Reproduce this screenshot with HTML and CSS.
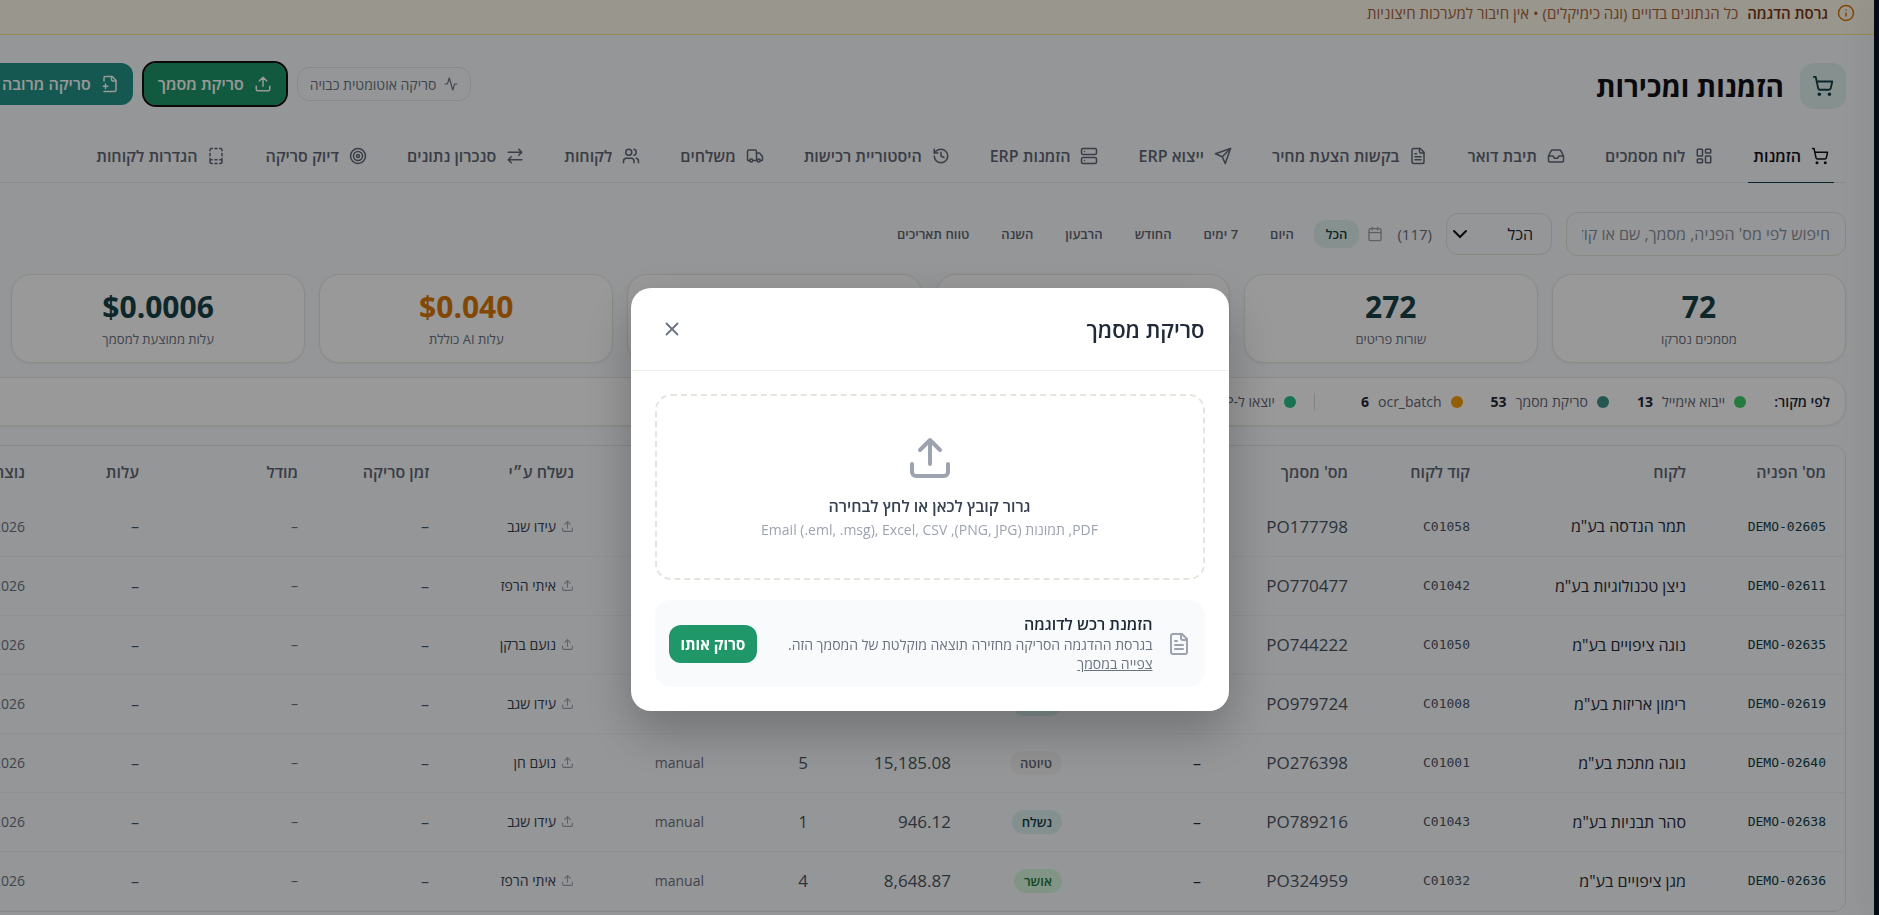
FILE: index.html
```html
<!DOCTYPE html>
<html lang="he" dir="rtl">
<head>
  <meta charset="UTF-8">
  <meta name="viewport" content="width=device-width, initial-scale=1">
  <title>הזמנות ומכירות</title>
  <link rel="stylesheet" href="styles.css">
</head>
<body>
  <!-- אייקונים -->
  <svg class="sprite" aria-hidden="true">
    <symbol id="i-cart" viewBox="0 0 24 24"><circle cx="8" cy="21" r="1"/><circle cx="19" cy="21" r="1"/><path d="M2.05 2.05h2l2.66 12.42a2 2 0 0 0 2 1.58h9.78a2 2 0 0 0 1.95-1.57l1.65-7.43H5.12"/></symbol>
    <symbol id="i-info" viewBox="0 0 24 24"><circle cx="12" cy="12" r="10"/><path d="M12 16v-4M12 8h.01"/></symbol>
    <symbol id="i-activity" viewBox="0 0 24 24"><path d="M22 12h-2.480a2 2 0 0 0-1.930 1.460l-2.350 8.360a.25.25 0 0 1-.48 0L9.240 2.180a.25.25 0 0 0-.48 0l-2.350 8.360A2 2 0 0 1 4.490 12H2"/></symbol>
    <symbol id="i-upload" viewBox="0 0 24 24"><path d="M21 15v4a2 2 0 0 1-2 2H5a2 2 0 0 1-2-2v-4"/><path d="M17 8l-5-5-5 5M12 3v12"/></symbol>
    <symbol id="i-fileplus" viewBox="0 0 24 24"><path d="M4 22h14a2 2 0 0 0 2-2V7l-5-5H6a2 2 0 0 0-2 2v4"/><path d="M14 2v4a2 2 0 0 0 2 2h4M3 15h6M6 12v6"/></symbol>
    <symbol id="i-board" viewBox="0 0 24 24"><rect width="7" height="9" x="3" y="3" rx="1"/><rect width="7" height="5" x="14" y="3" rx="1"/><rect width="7" height="9" x="14" y="12" rx="1"/><rect width="7" height="5" x="3" y="16" rx="1"/></symbol>
    <symbol id="i-inbox" viewBox="0 0 24 24"><path d="M22 12h-6l-2 3h-4l-2-3H2"/><path d="M5.45 5.11 2 12v6a2 2 0 0 0 2 2h16a2 2 0 0 0 2-2v-6l-3.45-6.89A2 2 0 0 0 16.76 4H7.24a2 2 0 0 0-1.79 1.11z"/></symbol>
    <symbol id="i-file" viewBox="0 0 24 24"><path d="M15 2H6a2 2 0 0 0-2 2v16a2 2 0 0 0 2 2h12a2 2 0 0 0 2-2V7Z"/><path d="M14 2v4a2 2 0 0 0 2 2h4M10 9H8M16 13H8M16 17H8"/></symbol>
    <symbol id="i-send" viewBox="0 0 24 24"><path d="m22 2-7 20-4-9-9-4Z"/><path d="M22 2 11 13"/></symbol>
    <symbol id="i-server" viewBox="0 0 24 24"><rect width="20" height="8" x="2" y="2" rx="2"/><rect width="20" height="8" x="2" y="14" rx="2"/><path d="M6 6h.01M6 18h.01"/></symbol>
    <symbol id="i-history" viewBox="0 0 24 24"><path d="M3 12a9 9 0 1 0 9-9 9.75 9.75 0 0 0-6.74 2.74L3 8"/><path d="M3 3v5h5M12 7v5l4 2"/></symbol>
    <symbol id="i-truck" viewBox="0 0 24 24"><path d="M14 18V6a2 2 0 0 0-2-2H4a2 2 0 0 0-2 2v11a1 1 0 0 0 1 1h2M15 18H9"/><path d="M19 18h2a1 1 0 0 0 1-1v-3.65a1 1 0 0 0-.22-.62l-3.48-4.35A1 1 0 0 0 17.52 8H14"/><circle cx="17" cy="18" r="2"/><circle cx="7" cy="18" r="2"/></symbol>
    <symbol id="i-users" viewBox="0 0 24 24"><path d="M16 21v-2a4 4 0 0 0-4-4H6a4 4 0 0 0-4 4v2"/><circle cx="9" cy="7" r="4"/><path d="M22 21v-2a4 4 0 0 0-3-3.87M16 3.13a4 4 0 0 1 0 7.75"/></symbol>
    <symbol id="i-swap" viewBox="0 0 24 24"><path d="m17 3 4 4-4 4M21 7H3M7 21l-4-4 4-4M3 17h18"/></symbol>
    <symbol id="i-target" viewBox="0 0 24 24"><circle cx="12" cy="12" r="10"/><circle cx="12" cy="12" r="6"/><circle cx="12" cy="12" r="2"/></symbol>
    <symbol id="i-template" viewBox="0 0 24 24"><path d="M4 5V4a2 2 0 0 1 2-2h1M10.500 2h3M17 2h1a2 2 0 0 1 2 2v1M4 8.500v3M20 8.500v3M4 15v5a2 2 0 0 0 2 2h1M20 15v5a2 2 0 0 1-2 2h-1M10.500 22h3M4 17h3M10.500 17h3M17 17h3"/></symbol>
    <symbol id="i-calendar" viewBox="0 0 24 24"><path d="M8 2v4M16 2v4M3 10h18"/><rect width="18" height="18" x="3" y="4" rx="2"/></symbol>
    <symbol id="i-x" viewBox="0 0 24 24"><path d="M18 6 6 18M6 6l12 12"/></symbol>
  </svg>

  <div class="app">
    <aside class="sidebar"></aside>

    <main class="page">
      <div class="demo-banner">
        <svg class="icon"><use href="#i-info"/></svg>
        <strong>גרסת הדגמה</strong>
        <span>כל הנתונים בדויים (וגה כימיקלים) • אין חיבור למערכות חיצוניות</span>
      </div>

      <div class="content">
        <header class="page-header">
          <div class="page-title">
            <span class="title-icon"><svg class="icon"><use href="#i-cart"/></svg></span>
            <h1>הזמנות ומכירות</h1>
          </div>
          <div class="actions">
            <button class="auto-scan"><svg class="icon"><use href="#i-activity"/></svg>סריקה אוטומטית כבויה</button>
            <button class="btn btn-green is-focused"><svg class="icon"><use href="#i-upload"/></svg>סריקת מסמך</button>
            <button class="btn btn-teal"><svg class="icon"><use href="#i-fileplus"/></svg>סריקה מרובה</button>
          </div>
        </header>

        <nav class="tabs">
          <a href="#" class="tab active"><svg class="icon"><use href="#i-cart"/></svg>הזמנות</a>
          <a href="#" class="tab"><svg class="icon"><use href="#i-board"/></svg>לוח מסמכים</a>
          <a href="#" class="tab"><svg class="icon"><use href="#i-inbox"/></svg>תיבת דואר</a>
          <a href="#" class="tab"><svg class="icon"><use href="#i-file"/></svg>בקשות הצעת מחיר</a>
          <a href="#" class="tab"><svg class="icon"><use href="#i-send"/></svg>ייצוא ERP</a>
          <a href="#" class="tab"><svg class="icon"><use href="#i-server"/></svg>הזמנות ERP</a>
          <a href="#" class="tab"><svg class="icon"><use href="#i-history"/></svg>היסטוריית רכישות</a>
          <a href="#" class="tab"><svg class="icon"><use href="#i-truck"/></svg>משלחים</a>
          <a href="#" class="tab"><svg class="icon"><use href="#i-users"/></svg>לקוחות</a>
          <a href="#" class="tab"><svg class="icon"><use href="#i-swap"/></svg>סנכרון נתונים</a>
          <a href="#" class="tab"><svg class="icon"><use href="#i-target"/></svg>דיוק סריקה</a>
          <a href="#" class="tab"><svg class="icon"><use href="#i-template"/></svg>הגדרות לקוחות</a>
        </nav>

        <div class="filters">
          <input class="search" type="text" aria-label="חיפוש" placeholder="חיפוש לפי מס' הפניה, מסמך, שם או קוד לקוח">
          <span class="select-wrap">
            <select class="status-select" aria-label="סטטוס"><option>הכל</option></select>
            <svg class="chevron" viewBox="0 0 16 16"><path d="M2 5l6 6 6-6"/></svg>
          </span>
          <span class="count">(117)</span>
          <svg class="icon cal"><use href="#i-calendar"/></svg>
          <div class="ranges">
            <button class="range active">הכל</button>
            <button class="range">היום</button>
            <button class="range">7 ימים</button>
            <button class="range">החודש</button>
            <button class="range">הרבעון</button>
            <button class="range">השנה</button>
            <button class="range">טווח תאריכים</button>
          </div>
        </div>

        <section class="stats">
          <div class="stat"><b>72</b><span>מסמכים נסרקו</span></div>
          <div class="stat"><b>272</b><span>שורות פריטים</span></div>
          <div class="stat"><b>98%</b><span>דיוק ממוצע</span></div>
          <div class="stat"><b>12</b><span>ממתינים</span></div>
          <div class="stat cost"><b>$0.040</b><span>עלות AI כוללת</span></div>
          <div class="stat"><b>$0.0006</b><span>עלות ממוצעת למסמך</span></div>
        </section>

        <section class="sources">
          <strong>לפי מקור:</strong>
          <span class="source"><i class="dot green"></i>ייבוא אימייל <b>13</b></span>
          <span class="source"><i class="dot teal"></i>סריקת מסמך <b>53</b></span>
          <span class="source"><i class="dot orange"></i>ocr_batch <b>6</b></span>
          <span class="divider"></span>
          <span class="source"><i class="dot emerald"></i>יוצאו ל-ERP <b>40</b></span>
        </section>

        <section class="table-card">
          <table>
            <colgroup>
              <col class="c-ref"><col class="c-customer"><col class="c-code"><col class="c-doc">
              <col class="c-erp"><col class="c-status"><col class="c-sum"><col class="c-items">
              <col class="c-source"><col class="c-sender"><col class="c-time"><col class="c-model">
              <col class="c-cost"><col>
            </colgroup>
            <thead>
              <tr>
                <th>מס' הפניה</th><th>לקוח</th><th>קוד לקוח</th><th>מס' מסמך</th>
                <th>מס' ERP</th><th>סטטוס</th><th>סכום</th><th>פריטים</th>
                <th>מקור</th><th>נשלח ע״י</th><th>זמן סריקה</th><th>מודל</th>
                <th>עלות</th><th>נוצר</th>
              </tr>
            </thead>
            <tbody id="ordersBody"></tbody>
          </table>
        </section>
      </div>
    </main>
  </div>

  <div class="overlay">
    <div class="modal" role="dialog" aria-labelledby="modalTitle">
      <div class="modal-header">
        <h2 id="modalTitle">סריקת מסמך</h2>
        <button class="close" aria-label="סגירה"><svg class="icon"><use href="#i-x"/></svg></button>
      </div>
      <div class="modal-body">
        <button class="dropzone">
          <svg class="icon"><use href="#i-upload"/></svg>
          <span class="drop-title">גרור קובץ לכאן או לחץ לבחירה</span>
          <span class="drop-hint">PDF, תמונות (PNG, JPG), Email (.eml, .msg), Excel, CSV</span>
        </button>
        <div class="sample">
          <svg class="icon"><use href="#i-file"/></svg>
          <div class="sample-text">
            <h3>הזמנת רכש לדוגמה</h3>
            <p>בגרסת ההדגמה הסריקה מחזירה תוצאה מוקלטת של המסמך הזה.</p>
            <a href="#">צפייה במסמך</a>
          </div>
          <button class="scan-it">סרוק אותו</button>
        </div>
      </div>
    </div>
  </div>

  <script>
  const orders = [
    ['DEMO-02605', 'תמר הנדסה בע"מ',      'C01058', 'PO177798', 'sent',     '421.50', '3', 'עידו שגב'],
    ['DEMO-02611', 'ניצן טכנולוגיות בע"מ', 'C01042', 'PO770477', 'draft',    '874.00', '2', 'איתי הרפז'],
    ['DEMO-02635', 'נוגה ציפויים בע"מ',    'C01050', 'PO744222', 'approved', '603.75', '6', 'נועם ברקן'],
    ['DEMO-02619', 'רימון אריזות בע"מ',    'C01008', 'PO979724', 'sent',     '',       '',  'עידו שגב'],
    ['DEMO-02640', 'נוגה מתכת בע"מ',       'C01001', 'PO276398', 'draft',    '15,185.08', '5', 'נועם חן'],
    ['DEMO-02638', 'סהר תבניות בע"מ',      'C01043', 'PO789216', 'sent',     '946.12',    '1', 'עידו שגב'],
    ['DEMO-02636', 'מגן ציפויים בע"מ',     'C01032', 'PO324959', 'approved', '8,648.87',  '4', 'איתי הרפז']
  ];
  const labels = { sent: 'נשלח', draft: 'טיוטה', approved: 'אושר' };

  document.getElementById('ordersBody').innerHTML = orders.map(o => `
    <tr>
      <td class="mono ref">${o[0]}</td>
      <td class="customer">${o[1]}</td>
      <td class="mono">${o[2]}</td>
      <td class="num">${o[3]}</td>
      <td class="customer">–</td>
      <td><span class="badge ${o[4]}">${labels[o[4]]}</span></td>
      <td class="num">${o[5]}</td>
      <td class="num">${o[6]}</td>
      <td class="small">manual</td>
      <td><span class="sender"><svg class="icon"><use href="#i-upload"/></svg>${o[7]}</span></td>
      <td>–</td>
      <td class="small">–</td>
      <td>–</td>
      <td class="small">14.7.2026</td>
    </tr>`).join('');
  </script>
</body>
</html>
```
FILE: styles.css
```css
* { box-sizing:border-box; }
html, body { margin:0; padding:0; height:100%; }
body {
  overflow:hidden;
  background:#f8fafc;
  font-family:"Open Sans", "Liberation Sans", sans-serif;
  font-size:14px;
  color:#1f2937;
}
h1, h2, h3, p { margin:0; }
button, input, select { font-family:inherit; }
button { border:none; cursor:pointer; }

.sprite { display:none; }
.icon {
  width:18px; height:18px; flex-shrink:0;
  fill:none; stroke:currentColor; stroke-width:2;
  stroke-linecap:round; stroke-linejoin:round;
}

.app { display:flex; height:100%; overflow:hidden; }
.sidebar {
  width:5px; flex-shrink:0; background:#0b1526;
  box-shadow:0 0 30px rgba(0,0,0,0.25); z-index:1;
}
.page { flex:1; min-width:0; }

.demo-banner {
  display:flex; align-items:center; gap:9px;
  padding:3px 19px 11px; font-size:15px; line-height:20px;
  background:#fffbeb; border-bottom:1px solid #fde68a;
  color:#a8633c;
}
.demo-banner strong { color:#78350f; font-weight:600; }
.demo-banner .icon { color:#d97706; }

/* התוכן ממשיך מעבר לקצה השמאלי של החלון */
.content { margin:0 28px 0 -24px; }

.page-header {
  display:flex; justify-content:space-between; align-items:center;
  padding:28px 0 28px 12px;
}
.page-title { display:flex; align-items:center; gap:16px; }
.page-title h1 { font-size:28px; line-height:32px; font-weight:700; color:#101018; }
.title-icon {
  display:flex; align-items:center; justify-content:center;
  width:46px; height:46px; border-radius:14px;
  background:#e0f0ef; color:#134044;
}
.title-icon .icon { width:22px; height:22px; }

.actions { display:flex; align-items:center; gap:11px; padding-bottom:4px; }
.auto-scan {
  display:flex; align-items:center; gap:8px;
  height:34px; padding:0 12px; border:1px solid #e5e7e0; border-radius:12px;
  background:none; color:#6b7280; font-size:14px;
}
.auto-scan .icon { width:14px; height:14px; }
.btn {
  display:flex; align-items:center; gap:10px;
  height:42px; padding:0 14px; border-radius:12px;
  color:#fff; font-size:16px; font-weight:600;
}
.btn-green { background:#1f9769; }
.btn-teal { background:#239387; }
.is-focused { outline:2px solid #101010; outline-offset:0; }

.tabs {
  display:flex; gap:30px;
  padding-right:12px; border-bottom:1px solid #e5e7eb;
}
.tab {
  display:flex; align-items:center; gap:10px;
  height:46px; padding:0 5px 8px; margin-bottom:-1px;
  border-bottom:1px solid transparent;
  color:#5f6675; font-size:16px; font-weight:600;
  text-decoration:none; white-space:nowrap;
}
.tab.active { color:#101018; border-bottom-color:#134044; }

.filters { display:flex; align-items:center; gap:14px; padding:29px 0 18px; }
.search {
  width:280px; height:44px; padding:0 15px;
  border:1px solid #e2e4da; border-radius:12px;
  background:none; font-size:16px; color:#1f2937;
}
.search::placeholder { color:#8b919c; }
.select-wrap { position:relative; }
.status-select {
  appearance:none; width:106px; height:42px; padding:0 18px;
  border:1px solid #e2e4da; border-radius:12px;
  background:none; font-size:16px; color:#1f2937;
}
.chevron {
  position:absolute; left:6px; top:13px; width:16px; height:16px;
  fill:none; stroke:#101018; stroke-width:2; stroke-linecap:round;
  pointer-events:none;
}
.count { font-size:15px; color:#6b7280; }
.cal { width:16px; height:16px; color:#9ca3af; }
.ranges { display:flex; gap:8px; margin-right:-6px; }
.range {
  height:28px; padding:0 12px; border-radius:12px;
  background:none; color:#5f6675; font-size:13px; font-weight:600;
}
.range.active { background:#e0f0ef; color:#134044; }

.stats {
  display:grid; grid-template-columns:repeat(6, 1fr); gap:14px;
  padding-left:35px; margin-bottom:14px;
}
.stat {
  display:flex; flex-direction:column; align-items:center; gap:3px;
  padding:14px 16px 12px; border:1px solid #e8e8e2; border-radius:20px;
  background:#fff; box-shadow:0 1px 3px rgba(0,0,0,0.06);
}
.stat b { font-size:30px; line-height:36px; color:#184246; }
.stat span { font-size:13px; line-height:22px; color:#6b7280; }
.stat.cost b { color:#d97706; }

.sources {
  display:flex; align-items:center; gap:28px;
  height:49px; padding:0 15px; margin-bottom:19px;
  border:1px solid #e8e8e2; border-radius:20px;
  background:#fff; box-shadow:0 1px 3px rgba(0,0,0,0.06);
  font-size:14px; color:#5f6675;
}
.sources strong, .sources b { color:#1f2937; }
.sources strong { font-weight:600; }
.source { display:flex; align-items:center; gap:9px; white-space:nowrap; }
.dot { width:12px; height:12px; border-radius:50%; }
.dot.green { background:#3fce6a; }
.dot.teal { background:#3f8f88; }
.dot.orange { background:#f59e0b; }
.dot.emerald { background:#2bc08a; }
.divider { width:1px; height:18px; margin-right:18px; margin-left:-10px; background:#d8dadd; }

.table-card { border:1px solid #e2e4e6; border-radius:12px; overflow:hidden; }
table { width:100%; table-layout:fixed; border-collapse:collapse; }
.c-ref { width:140px; }
.c-customer { width:216px; }
.c-code { width:122px; }
.c-doc { width:147px; }
.c-erp { width:139px; }
.c-status { width:111px; }
.c-sum { width:143px; }
.c-items { width:104px; }
.c-source { width:130px; }
.c-sender { width:145px; }
.c-time { width:131px; }
.c-model { width:159px; }
.c-cost { width:114px; }
th, td { padding:0 19px 0 0; text-align:right; white-space:nowrap; }
th { height:51px; font-size:16px; font-weight:600; color:#5f6675; }
td { height:59px; border-bottom:1px solid #eff1f4; font-size:16px; color:#4b5563; }
td.customer { color:#262b38; }
td.num { font-size:17px; }
td.small { font-size:14px; color:#6b7280; }
td.mono { font-family:"DejaVu Sans Mono", monospace; font-size:13px; }
td.ref { color:#134044; }
.badge {
  display:inline-block; padding:0 10px; border-radius:12px;
  font-size:13px; line-height:24px; font-weight:600;
}
.badge.draft { background:#f3f1f3; color:#5f6675; }
.badge.sent { background:#dcefee; color:#134044; }
.badge.approved { background:#d7f7df; color:#1f7a3d; }
.sender { display:flex; align-items:center; gap:5px; font-size:14px; color:#374151; }
.sender .icon { width:13px; height:13px; color:#9ca3af; }

.overlay {
  position:fixed; inset:0; z-index:10;
  display:flex; justify-content:center; align-items:flex-start;
  padding:288px 20px 0 0;
  background:rgba(0,0,0,0.4);
}
.modal {
  width:598px; border-radius:20px; background:#fff;
  box-shadow:0 20px 50px rgba(0,0,0,0.25);
}
.modal-header {
  display:flex; justify-content:space-between; align-items:center;
  height:83px; padding:0 24px; border-bottom:1px solid #f0f0ea;
}
.modal-header h2 { font-size:22px; font-weight:600; color:#1f2937; }
.close {
  display:flex; align-items:center; justify-content:center;
  width:34px; height:34px; padding:0; background:none; color:#6b7280;
}
.close .icon { width:22px; height:22px; }
.modal-body { padding:23px 24px 24px; }
.dropzone {
  display:flex; flex-direction:column; align-items:center;
  width:100%; padding:38px 20px; margin-bottom:20px;
  border:2px dashed #e5e5dd; border-radius:16px; background:none;
}
.dropzone .icon { width:48px; height:48px; margin-bottom:12px; color:#9ca3af; }
.drop-title { font-size:16px; line-height:24px; font-weight:600; color:#374151; }
.drop-hint { margin-top:2px; font-size:14px; line-height:20px; color:#9ca3af; }
.sample {
  display:flex; align-items:center; gap:14px;
  padding:14px; border-radius:16px; background:#f8fafc;
}
.sample > .icon { width:24px; height:24px; color:#9ca3af; }
.sample-text { flex:1; color:#6b7280; font-size:14px; line-height:19px; }
.sample-text h3 { font-size:16px; line-height:21px; font-weight:600; color:#1f2937; }
.sample-text a { color:inherit; }
.scan-it {
  height:38px; padding:0 12px; border-radius:12px;
  background:#1f9769; color:#fff; font-size:15px; font-weight:700;
}
```
